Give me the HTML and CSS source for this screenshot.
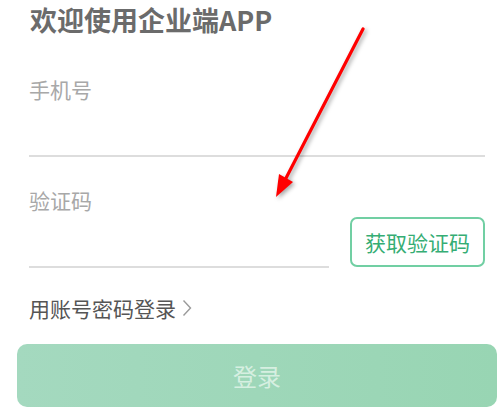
FILE: index.html
```html
<!DOCTYPE HTML>
<html>
    <head>
        <meta charset="utf-8">
        <title>企业端登录</title>
        <link rel="stylesheet" href="styles.css">
    </head>
    <body>

        <div class="page">

            <h1 class="title">欢迎使用企业端APP</h1>

            <div class="field field-phone">
                <div class="label">手机号</div>
                <div class="input"></div>
            </div>

            <div class="code-row">
                <div class="field field-code">
                    <div class="label">验证码</div>
                    <div class="input"></div>
                </div>
                <button class="get-code">获取验证码</button>
            </div>

            <div class="switch">用账号密码登录<span class="chevron">
                <svg width="10" height="18" viewBox="0 0 10 18"><path d="M1.5 1.5 L8.5 9 L1.5 16.5" fill="none" stroke="#9a9a9a" stroke-width="1.4"/></svg>
            </span></div>

            <button class="login">登录</button>

            <!-- red arrow drawn over the screenshot -->
            <svg class="arrow" width="497" height="416" viewBox="0 0 497 416">
                <line x1="363" y1="29" x2="284" y2="182" stroke="#ff0000" stroke-width="3.2" stroke-linecap="round"/>
                <polygon points="276,197 279,174 293,182" fill="#ff0000"/>
            </svg>

        </div>

    </body>
</html>
```

FILE: styles.css
```css
*{
    margin: 0;
    padding: 0;
    box-sizing: border-box;
}

body, html{
    height: 100%;
    background: #fff;
    font-family: "Noto Sans CJK SC", "Noto Sans", sans-serif;
}

.page{
    position: relative;
    padding: 0 12px 0 29px;
    display: flex;
    flex-direction: column;
}

.title{
    height: 42px;
    line-height: 40px;
    font-size: 27px;
    font-weight: bold;
    color: #6b6b6b;
    padding-left: 1px;
}

.field{
    border-bottom: 2px solid #dddddd;
}

.label{
    height: 30px;
    line-height: 30px;
    font-size: 21px;
    color: #a8a8a8;
}

.field-phone{
    padding-top: 32px;
}

.field-phone .input{
    height: 51px;
}

.code-row{
    display: flex;
    align-items: flex-end;
}

.field-code{
    width: 300px;
    padding-top: 28px;
}

.field-code .input{
    height: 51px;
}

.get-code{
    margin-left: auto;
    margin-bottom: 1px;
    width: 135px;
    height: 50px;
    border: 2px solid #71cfa3;
    border-radius: 7px;
    background: #fff;
    color: #35ad74;
    font-family: inherit;
    font-size: 21px;
}

.switch{
    margin-top: 25px;
    height: 30px;
    line-height: 30px;
    font-size: 21px;
    color: #555;
    display: flex;
    align-items: center;
}

.chevron{
    display: flex;
    margin-left: 6px;
}

.login{
    margin: 21px -12px 0 -12px;
    height: 63px;
    border: 0;
    border-radius: 10px;
    background: linear-gradient(to right, #a4d9bf, #98d5b3);
    color: #d6efe1;
    font-family: inherit;
    font-size: 24px;
}

.arrow{
    position: absolute;
    left: 0;
    top: 0;
    filter: drop-shadow(2px 2px 2px rgba(0, 0, 0, 0.35));
}
```
